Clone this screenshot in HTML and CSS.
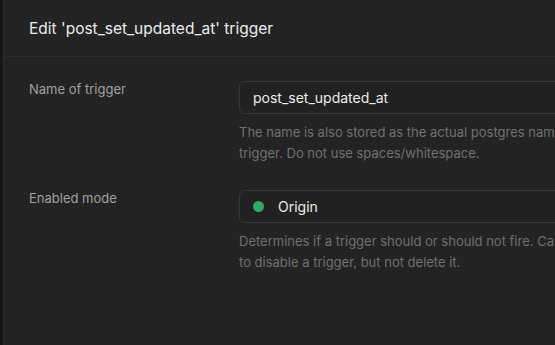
FILE: index.html
```html
<!DOCTYPE html>
<html lang="en">
<head>
    <meta charset="UTF-8">
    <title>Edit trigger</title>
    <link rel="stylesheet" href="styles.css">
</head>
<body>
    <div class="layout">
        <div class="side-strip"></div>
        <div class="panel">
            <div class="panel-header">
                <h1>Edit 'post_set_updated_at' trigger</h1>
            </div>
            <div class="panel-body">
                <div class="field">
                    <label class="field-label" for="triggerName">Name of trigger</label>
                    <div class="field-control">
                        <input type="text" id="triggerName" class="input" value="post_set_updated_at">
                        <p class="help">The name is also stored as the actual postgres name of the trigger. Do not use spaces/whitespace.</p>
                    </div>
                </div>
                <div class="field">
                    <div class="field-label">Enabled mode</div>
                    <div class="field-control">
                        <div class="select">
                            <span class="dot"></span>
                            <span>Origin</span>
                        </div>
                        <p class="help">Determines if a trigger should or should not fire. Can be used to disable a trigger, but not delete it.</p>
                    </div>
                </div>
            </div>
        </div>
    </div>
</body>
</html>
```

FILE: styles.css
```css
* {
    margin: 0;
    padding: 0;
    box-sizing: border-box;
}

body {
    font-family: Inter, "Noto Sans", sans-serif;
    background: #171717;
    color: #ededed;
    overflow: hidden;
}

.layout {
    display: flex;
    height: 345px;
}

.side-strip {
    width: 4px;
    flex-shrink: 0;
    background: #171717;
    border-right: 1px solid #2a2a2a;
}

.panel {
    flex: 1;
    background: #232323;
    min-width: 0;
    overflow: hidden;
}

.panel-header {
    height: 57px;
    padding: 0 25px;
    display: flex;
    align-items: center;
    border-bottom: 1px solid #2c2c2c;
}

.panel-header h1 {
    font-size: 15.5px;
    font-weight: 400;
    color: #ededed;
    white-space: nowrap;
}

.panel-body {
    padding: 24px 25px;
}

.field {
    display: flex;
    margin-bottom: 26px;
}

.field-label {
    width: 210px;
    flex-shrink: 0;
    font-size: 13px;
    color: #a0a0a0;
    line-height: 16px;
}

.field-control {
    width: 420px;
    flex-shrink: 0;
}

.input,
.select {
    display: flex;
    align-items: center;
    width: 100%;
    height: 33px;
    padding: 0 13px;
    background: #212121;
    border: 1px solid #363636;
    border-radius: 6px;
    font-family: inherit;
    font-size: 14px;
    color: #ededed;
    outline: none;
}

.dot {
    width: 11px;
    height: 11px;
    border-radius: 50%;
    background: #2ea866;
    margin-right: 14px;
}

.help {
    width: 380px;
    margin-top: 8px;
    font-size: 13px;
    line-height: 21px;
    color: #707070;
}
```
